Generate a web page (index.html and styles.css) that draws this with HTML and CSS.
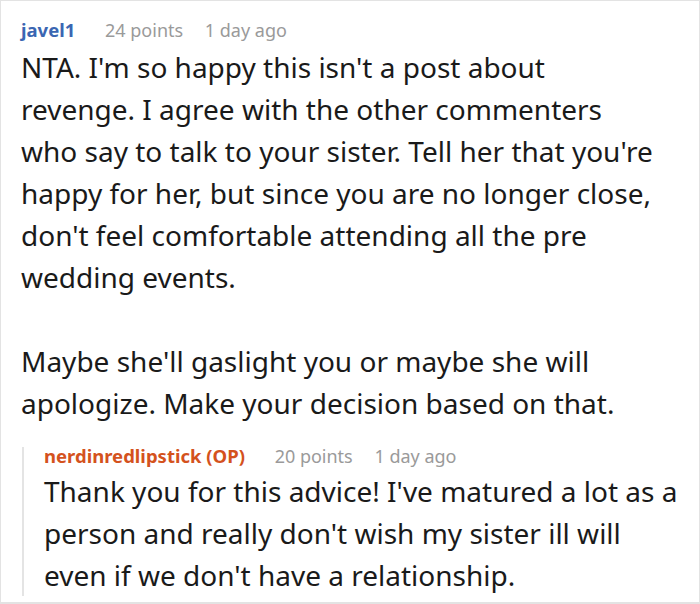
FILE: index.html
```html
<!DOCTYPE html>
<html lang="en">
<head>
<meta charset="utf-8">
<title>Comment</title>
<link rel="stylesheet" href="styles.css">
</head>
<body>
<div class="frame">
  <div class="comment">
    <div class="meta">
      <span class="author">javel1</span>
      <span class="points">24 points</span>
      <span class="time">1 day ago</span>
    </div>
    <div class="body">
      <p>NTA. I'm so happy this isn't a post about<br>revenge. I agree with the other commenters<br>who say to talk to your sister. Tell her that you're<br>happy for her, but since you are no longer close,<br>don't feel comfortable attending all the pre<br>wedding events.</p>
      <p>Maybe she'll gaslight you or maybe she will<br>apologize. Make your decision based on that.</p>
    </div>
    <div class="reply">
      <div class="meta meta-reply">
        <span class="author op">nerdinredlipstick (OP)</span>
        <span class="points">20 points</span>
        <span class="time">1 day ago</span>
      </div>
      <div class="body">
        <p>Thank you for this advice! I've matured a lot as a<br>person and really don't wish my sister ill will<br>even if we don't have a relationship.</p>
      </div>
    </div>
  </div>
</div>
</body>
</html>
```

FILE: styles.css
```css
html, body {
  margin: 0;
  padding: 0;
  background: #ffffff;
}

.frame {
  box-sizing: border-box;
  width: 700px;
  height: 604px;
  overflow: hidden;
  border: 1px solid #e3e3e3;
  border-bottom-width: 2px;
  background: #ffffff;
  font-family: "Noto Sans", "Open Sans", sans-serif;
}

.comment {
  padding: 16px 0 0 20px;
}

.meta {
  font-size: 18px;
  line-height: 26px;
  white-space: nowrap;
}

.author {
  font-size: 18.5px;
  font-weight: bold;
  color: #3a66b2;
  margin-right: 25px;
}

.author.op {
  color: #d4521d;
}

.points {
  color: #9a9a9a;
  margin-right: 17px;
}

.time {
  color: #9a9a9a;
}

.body {
  margin-top: 3px;
  font-size: 28px;
  line-height: 42px;
  color: #1a1a1a;
  white-space: nowrap;
}

.body p {
  margin: 0 0 42px 0;
}

.body p:last-child {
  margin-bottom: 0;
}

.reply {
  margin-top: 23px;
  margin-left: 1px;
  border-left: 2px solid #e4e4e4;
  padding-left: 20px;
}

.meta-reply {
  line-height: 17px;
}

.reply .body {
  margin-top: 5px;
}
```
